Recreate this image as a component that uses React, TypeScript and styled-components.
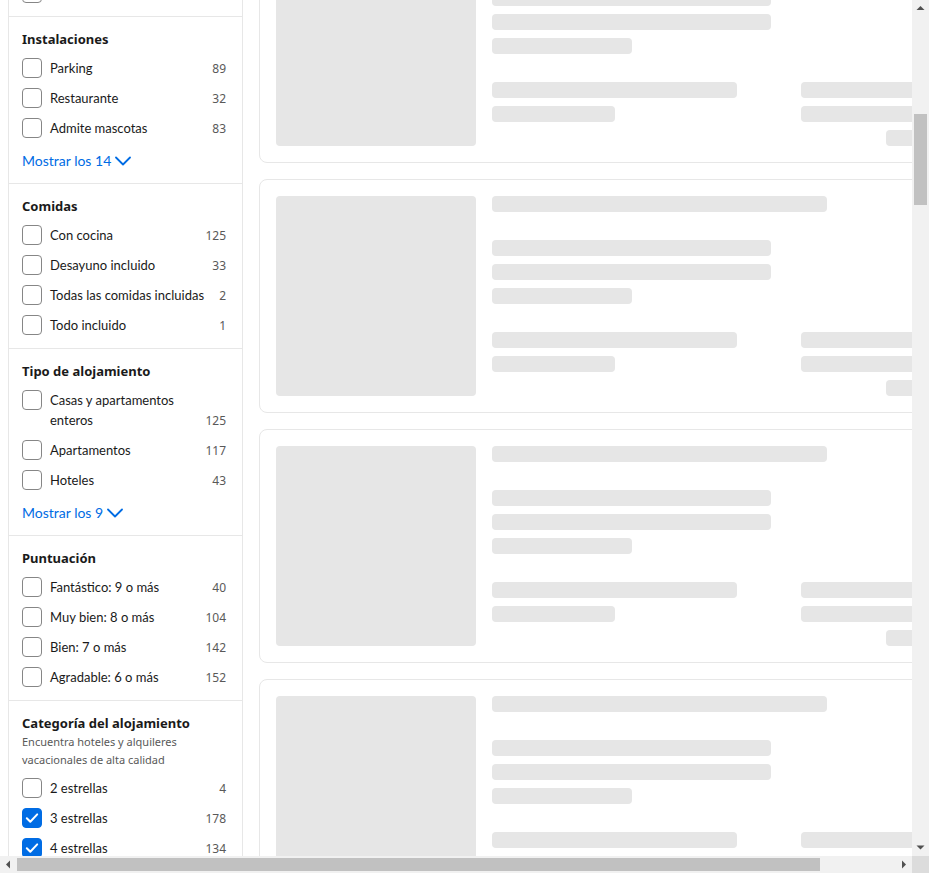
import React, { useLayoutEffect } from 'react';
import styled, { createGlobalStyle } from 'styled-components';

const GlobalStyle = createGlobalStyle`
  body {
    margin: 8px;
    background: #ffffff;
    color: #1a1a1a;
    font-family: "Noto Sans", "Open Sans", sans-serif;
  }
  * { box-sizing: border-box; }
`;

const Page = styled.div`
  width: 981px;
`;

const TopBar = styled.header`
  height: 78px;
  margin-bottom: 16px;
  display: flex;
  align-items: flex-end;
  justify-content: space-between;
`;

const ResultsTitle = styled.h1`
  margin: 0;
  font-size: 20px;
  line-height: 28px;
  font-weight: 700;
`;

const SortButton = styled.button`
  border: 1px solid #e7e7e7;
  background: #fff;
  border-radius: 16px;
  padding: 4px 12px;
  font: inherit;
  font-size: 13px;
  color: #1a1a1a;
`;

const Main = styled.div`
  display: flex;
  align-items: flex-start;
  gap: 16px;
`;

const Sidebar = styled.aside`
  width: 235px;
  flex-shrink: 0;
  border: 1px solid #e7e7e7;
  border-radius: 8px;
`;

const FilterHeader = styled.div`
  padding: 16px 16px 16px 13px;
  font-size: 16px;
  line-height: 22px;
  font-weight: 700;
`;

const Section = styled.section`
  border-top: 1px solid #e7e7e7;
  padding: 12px 16px 8px 13px;
`;

const SectionTitle = styled.h3`
  margin: 0;
  font-size: 13px;
  line-height: 20px;
  font-weight: 700;
  color: #1a1a1a;
`;

const SectionNote = styled.p`
  margin: 0;
  font-size: 11px;
  line-height: 18px;
  color: #595959;
`;

const OptionList = styled.div`
  margin-top: 4px;
  display: flex;
  flex-direction: column;
`;

const OptionRow = styled.label`
  display: flex;
  align-items: flex-start;
  padding: 5px 0;
`;

const Box = styled.span<{ $checked?: boolean }>`
  width: 20px;
  height: 20px;
  flex-shrink: 0;
  margin-right: 8px;
  border-radius: 4px;
  border: 1px solid ${(p) => (p.$checked ? '#006ce4' : '#868686')};
  background: ${(p) => (p.$checked ? '#006ce4' : '#ffffff')};
  display: flex;
  align-items: center;
  justify-content: center;
`;

const OptionLabel = styled.span`
  flex: 1;
  font-family: Lato, "Noto Sans", sans-serif;
  font-size: 13px;
  line-height: 20px;
  color: #1a1a1a;
`;

const OptionCount = styled.span`
  align-self: flex-end;
  margin-left: 4px;
  font-size: 12px;
  line-height: 18px;
  color: #595959;
`;

const ShowMore = styled.button`
  display: inline-flex;
  align-items: center;
  gap: 4px;
  margin: 8px 0 4px;
  padding: 0;
  border: 0;
  background: none;
  font-family: Lato, "Noto Sans", sans-serif;
  font-size: 14px;
  line-height: 20px;
  color: #006ce4;
  cursor: pointer;
`;

const CardList = styled.div`
  flex: 1;
  display: flex;
  flex-direction: column;
  gap: 16px;
`;

const Card = styled.div`
  height: 234px;
  display: flex;
  gap: 16px;
  padding: 16px;
  border: 1px solid #e7e7e7;
  border-radius: 8px;
`;

const Thumb = styled.div`
  width: 200px;
  height: 200px;
  flex-shrink: 0;
  border-radius: 4px;
  background: #e6e6e6;
`;

const Info = styled.div`
  flex: 1;
  display: flex;
  flex-direction: column;
  justify-content: space-between;
`;

const BarGroup = styled.div<{ $end?: boolean }>`
  display: flex;
  flex-direction: column;
  gap: 8px;
  align-items: ${(p) => (p.$end ? 'flex-end' : 'flex-start')};
`;

const BottomRow = styled.div`
  display: flex;
  justify-content: space-between;
  align-items: flex-start;
`;

const Bar = styled.div<{ $w: number }>`
  width: ${(p) => p.$w}px;
  height: 16px;
  border-radius: 4px;
  background: #e6e6e6;
`;

const Footer = styled.footer`
  margin-top: 24px;
  height: 115px;
  display: flex;
  align-items: center;
  justify-content: center;
  font-size: 13px;
  color: #595959;
`;

/* Browser-style scrollbars drawn over the viewport edges */
const VScroll = styled.div`
  position: fixed;
  top: 0;
  right: 0;
  bottom: 17px;
  width: 17px;
  background: #f1f1f1;
  display: flex;
  flex-direction: column;
  z-index: 10;
`;

const HScroll = styled.div`
  position: fixed;
  left: 0;
  right: 17px;
  bottom: 0;
  height: 17px;
  background: #f1f1f1;
  display: flex;
  z-index: 10;
`;

const Corner = styled.div`
  position: fixed;
  right: 0;
  bottom: 0;
  width: 17px;
  height: 17px;
  background: #dcdcdc;
  z-index: 10;
`;

const ArrowButton = styled.div`
  width: 17px;
  height: 17px;
  flex-shrink: 0;
  display: flex;
  align-items: center;
  justify-content: center;
`;

const Track = styled.div<{ $vertical?: boolean }>`
  flex: 1;
  display: flex;
  flex-direction: ${(p) => (p.$vertical ? 'column' : 'row')};
  padding: ${(p) => (p.$vertical ? '0 2px' : '2px 0')};
`;

const ThumbBar = styled.div<{ $offset: number; $size: number; $vertical?: boolean }>`
  background: #c1c1c1;
  flex-shrink: 0;
  ${(p) =>
    p.$vertical
      ? `margin-top: ${p.$offset}px; height: ${p.$size}px;`
      : `margin-left: ${p.$offset}px; width: ${p.$size}px;`}
`;

function Arrow({ dir }: { dir: 'up' | 'down' | 'left' | 'right' }) {
  const pts = {
    up: '4.5,10 12.5,10 8.5,6',
    down: '4.5,6.5 12.5,6.5 8.5,10.5',
    left: '10,4.5 10,12.5 6,8.5',
    right: '7,4.5 7,12.5 11,8.5',
  }[dir];
  return (
    <svg width="17" height="17" viewBox="0 0 17 17" aria-hidden="true">
      <polygon points={pts} fill="#505050" />
    </svg>
  );
}

type Opt = { label: string; count: number; checked?: boolean };
type Group = { title: string; note?: string; options: Opt[]; more?: number };

const groups: Group[] = [
  {
    title: 'Filtros populares',
    options: [
      { label: 'Hoteles', count: 43 },
      { label: 'Desayuno incluido', count: 33 },
      { label: 'Parking', count: 89 },
      { label: 'Fantástico: 9 o más', count: 40 },
      { label: 'Apartamentos', count: 117 },
      { label: 'Admite mascotas', count: 83 },
    ],
    more: 10,
  },
  {
    title: 'Distancia del centro',
    options: [
      { label: 'Menos de 1 km', count: 52 },
      { label: 'Menos de 3 km', count: 98 },
      { label: 'Menos de 5 km', count: 112 },
    ],
  },
  {
    title: 'Marcas',
    options: [
      { label: 'Meliá Hotels', count: 5 },
      { label: 'Iberostar', count: 3 },
      { label: 'Catalonia Hotels', count: 4 },
      { label: 'Room Mate', count: 3 },
      { label: 'Ibis', count: 2 },
    ],
  },
  {
    title: 'Reserva flexible',
    options: [
      { label: 'Cancelación gratis', count: 98 },
      { label: 'Reserva sin tarjeta', count: 14 },
      { label: 'Pago en destino', count: 21 },
      { label: 'Ofertas especiales', count: 11 },
      { label: 'Precio final', count: 30 },
    ],
  },
  {
    title: 'Instalaciones',
    options: [
      { label: 'Parking', count: 89 },
      { label: 'Restaurante', count: 32 },
      { label: 'Admite mascotas', count: 83 },
    ],
    more: 14,
  },
  {
    title: 'Comidas',
    options: [
      { label: 'Con cocina', count: 125 },
      { label: 'Desayuno incluido', count: 33 },
      { label: 'Todas las comidas incluidas', count: 2 },
      { label: 'Todo incluido', count: 1 },
    ],
  },
  {
    title: 'Tipo de alojamiento',
    options: [
      { label: 'Casas y apartamentos enteros', count: 125 },
      { label: 'Apartamentos', count: 117 },
      { label: 'Hoteles', count: 43 },
    ],
    more: 9,
  },
  {
    title: 'Puntuación',
    options: [
      { label: 'Fantástico: 9 o más', count: 40 },
      { label: 'Muy bien: 8 o más', count: 104 },
      { label: 'Bien: 7 o más', count: 142 },
      { label: 'Agradable: 6 o más', count: 152 },
    ],
  },
  {
    title: 'Categoría del alojamiento',
    note: 'Encuentra hoteles y alquileres vacacionales de alta calidad',
    options: [
      { label: '2 estrellas', count: 4 },
      { label: '3 estrellas', count: 178, checked: true },
      { label: '4 estrellas', count: 134, checked: true },
      { label: '5 estrellas', count: 21 },
    ],
  },
  {
    title: 'Distrito',
    options: [
      { label: 'Centro', count: 64 },
      { label: 'Salamanca', count: 18 },
      { label: 'Chamberí', count: 15 },
    ],
  },
];

function CheckIcon() {
  return (
    <svg width="14" height="14" viewBox="0 0 14 14" fill="none" aria-hidden="true">
      <path d="M1.8 7.2 L5.3 10.7 L12.2 3.4" stroke="#ffffff" strokeWidth="2" strokeLinecap="round" strokeLinejoin="round" />
    </svg>
  );
}

function ChevronDown() {
  return (
    <svg width="16" height="16" viewBox="0 0 16 16" fill="none" aria-hidden="true">
      <path d="M1 4.5 L8 11.5 L15 4.5" stroke="#006ce4" strokeWidth="1.8" strokeLinecap="round" strokeLinejoin="round" />
    </svg>
  );
}

function FilterGroup({ group }: { group: Group }) {
  return (
    <Section>
      <SectionTitle>{group.title}</SectionTitle>
      {group.note && <SectionNote>{group.note}</SectionNote>}
      <OptionList>
        {group.options.map((o) => (
          <OptionRow key={o.label}>
            <Box $checked={o.checked}>{o.checked && <CheckIcon />}</Box>
            <OptionLabel>{o.label}</OptionLabel>
            <OptionCount>{o.count}</OptionCount>
          </OptionRow>
        ))}
      </OptionList>
      {group.more && (
        <ShowMore type="button">
          Mostrar los {group.more}
          <ChevronDown />
        </ShowMore>
      )}
    </Section>
  );
}

function SkeletonCard() {
  return (
    <Card>
      <Thumb />
      <Info>
        <BarGroup>
          <Bar $w={335} />
        </BarGroup>
        <BarGroup>
          <Bar $w={279} />
          <Bar $w={279} />
          <Bar $w={140} />
        </BarGroup>
        <BottomRow>
          <BarGroup>
            <Bar $w={245} />
            <Bar $w={123} />
          </BarGroup>
          <BarGroup $end>
            <Bar $w={171} />
            <Bar $w={171} />
            <Bar $w={86} />
          </BarGroup>
        </BottomRow>
      </Info>
    </Card>
  );
}

const cards = Array.from({ length: 30 }, (_, i) => i);

export default function App() {
  useLayoutEffect(() => {
    if ('scrollRestoration' in history) history.scrollRestoration = 'manual';
    window.scrollTo(0, 923);
  }, []);

  return (
    <>
      <GlobalStyle />
      <Page>
        <TopBar>
          <ResultsTitle>Madrid: 125 alojamientos encontrados</ResultsTitle>
          <SortButton type="button">Ordenar por: Nuestros destacados</SortButton>
        </TopBar>
        <Main>
          <Sidebar>
            <FilterHeader>Filtrar por:</FilterHeader>
            {groups.map((g) => (
              <FilterGroup key={g.title} group={g} />
            ))}
          </Sidebar>
          <CardList>
            {cards.map((i) => (
              <SkeletonCard key={i} />
            ))}
          </CardList>
        </Main>
        <Footer>Página 1 de 5</Footer>
      </Page>

      <VScroll>
        <ArrowButton>
          <Arrow dir="up" />
        </ArrowButton>
        <Track $vertical>
          <ThumbBar $vertical $offset={97} $size={91} />
        </Track>
        <ArrowButton>
          <Arrow dir="down" />
        </ArrowButton>
      </VScroll>
      <HScroll>
        <ArrowButton>
          <Arrow dir="left" />
        </ArrowButton>
        <Track>
          <ThumbBar $offset={0} $size={803} />
        </Track>
        <ArrowButton>
          <Arrow dir="right" />
        </ArrowButton>
      </HScroll>
      <Corner />
    </>
  );
}
